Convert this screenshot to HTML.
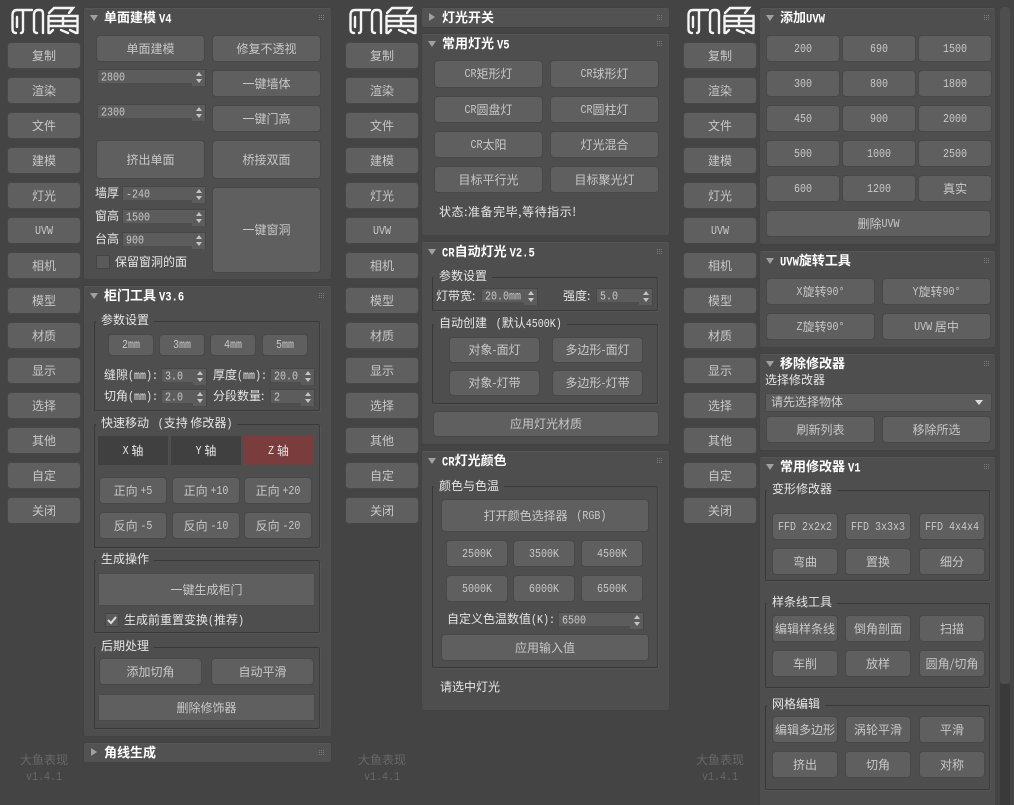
<!DOCTYPE html>
<html><head><meta charset="utf-8"><title>大鱼表现</title>
<style>
*{box-sizing:border-box;margin:0;padding:0}
html,body{width:1014px;height:805px;overflow:hidden;background:#444}
body{position:relative;font:12px/16px "WenQuanYi Zen Hei","Noto Sans CJK SC",sans-serif;color:#ccc}
i{font:normal 10px/16px "Liberation Mono",monospace;display:inline-block;transform:scaleY(1.2);white-space:pre}
.b i,.n i,.q i,.x i{transform:translateY(2px) scaleY(1.2)}
.c{position:absolute;top:0;width:88px;height:805px}
.l{position:absolute;left:11px;top:6px}
.n{position:absolute;left:7px;width:74px;height:27px}
.b,.n,.q{background:#5f5f5f;border:1px solid #484848;border-radius:4px;color:#c8c8c8;display:flex;align-items:center;justify-content:center;white-space:nowrap}
.b,.q{position:absolute}
.q{border-radius:0;border-color:#4a4a4a}
.f1,.f2{position:absolute;left:0;width:88px;text-align:center;color:#686868}
.f1{top:752px}.f2{top:768px}
.p{position:absolute;background:#4e4e4e;border:1px solid #424242;border-radius:3px;box-shadow:inset 0 1px #565656}
.h{position:absolute;white-space:nowrap;color:#fff;font-weight:bold;font-size:13px;line-height:16px}
.h i{font-weight:bold;font-size:10.5px}
.d,.r{position:absolute;width:0;height:0}
.d{border:4px solid transparent;border-top:6px solid #a0a0a0;border-bottom:0}
.r{border:4px solid transparent;border-left:6px solid #a0a0a0;border-right:0}
.o{position:absolute;width:1px;height:1px;background:#7a7a7a;box-shadow:2px 0 #7a7a7a,4px 0 #7a7a7a,0 2px #7a7a7a,2px 2px #7a7a7a,4px 2px #7a7a7a,0 4px #7a7a7a,2px 4px #7a7a7a,4px 4px #7a7a7a}
.g{position:absolute;border:1px solid #383838;border-right-color:#3c3c3c;border-radius:2px;box-shadow:1px 1px #555}
.e,.t{position:absolute;white-space:nowrap;color:#e6e6e6;line-height:16px}
.e{background:#4e4e4e;padding:0 5px}
.s{position:absolute;height:18px;border:1px solid #464646;border-left-color:#4a4a4a;background:linear-gradient(#5c5c5c,#5c5c5c) 0 0/100% 13px no-repeat,linear-gradient(#5c5c5c,#5c5c5c) right 0/13px 100% no-repeat;border-bottom-color:transparent;color:#c8c8c8;padding-left:3px;line-height:13px;white-space:nowrap}
.s i{line-height:13px;transform:translateY(-1px) scaleY(1.2)}
.s:before,.s:after{content:"";position:absolute;right:3px;border:3px solid transparent}
.s:before{top:2px;border-bottom:4px solid #c4c4c4;border-top:0}
.s:after{top:9px;border-top:4px solid #c4c4c4;border-bottom:0}
.k{position:absolute;width:14px;height:14px;background:#5a5a5a;border:1px solid #454545}
.x{position:absolute;background:#404040;color:#e8e8e8;display:flex;align-items:center;justify-content:center;white-space:nowrap}
.dd{position:absolute;background:#5c5c5c;border:1px solid #484848;color:#ccc;line-height:16px;padding-left:5px}
</style></head><body>

<div class="c" style="left:0">
<svg class="l" width="70" height="30" viewBox="0 0 70 30" fill="none" stroke="#f4f4f4" stroke-width="2.4" stroke-linecap="round"><path d="M1.5 9Q1.5 4 6 4H21M1.5 9V23Q1.5 27 5 27M6 11V21M12 4V24Q12 27 10 27M23 9V24Q23 27 26 27M23 9Q23 4 27 4H29Q32 4 32 8V27"/><path d="M38 7L43 2H62L58 7M37.5 10H66.5V27M37.5 10V27M38 15H66M38 20H66M52 10V20M42 24L39 27M50 24L57 27M59 24L65 27"/></svg>
<div class="n" style="top:42px">复制</div><div class="n" style="top:77px">渲染</div><div class="n" style="top:112px">文件</div><div class="n" style="top:147px">建模</div><div class="n" style="top:182px">灯光</div><div class="n" style="top:217px"><i>UVW</i></div><div class="n" style="top:252px">相机</div><div class="n" style="top:287px">模型</div><div class="n" style="top:322px">材质</div><div class="n" style="top:357px">显示</div><div class="n" style="top:392px">选择</div><div class="n" style="top:427px">其他</div><div class="n" style="top:462px">自定</div><div class="n" style="top:497px">关闭</div>
<div class="f1">大鱼表现</div><div class="f2"><i>v1.4.1</i></div>
</div>
<div class="c" style="left:338px">
<svg class="l" width="70" height="30" viewBox="0 0 70 30" fill="none" stroke="#f4f4f4" stroke-width="2.4" stroke-linecap="round"><path d="M1.5 9Q1.5 4 6 4H21M1.5 9V23Q1.5 27 5 27M6 11V21M12 4V24Q12 27 10 27M23 9V24Q23 27 26 27M23 9Q23 4 27 4H29Q32 4 32 8V27"/><path d="M38 7L43 2H62L58 7M37.5 10H66.5V27M37.5 10V27M38 15H66M38 20H66M52 10V20M42 24L39 27M50 24L57 27M59 24L65 27"/></svg>
<div class="n" style="top:42px">复制</div><div class="n" style="top:77px">渲染</div><div class="n" style="top:112px">文件</div><div class="n" style="top:147px">建模</div><div class="n" style="top:182px">灯光</div><div class="n" style="top:217px"><i>UVW</i></div><div class="n" style="top:252px">相机</div><div class="n" style="top:287px">模型</div><div class="n" style="top:322px">材质</div><div class="n" style="top:357px">显示</div><div class="n" style="top:392px">选择</div><div class="n" style="top:427px">其他</div><div class="n" style="top:462px">自定</div><div class="n" style="top:497px">关闭</div>
<div class="f1">大鱼表现</div><div class="f2"><i>v1.4.1</i></div>
</div>
<div class="c" style="left:676px">
<svg class="l" width="70" height="30" viewBox="0 0 70 30" fill="none" stroke="#f4f4f4" stroke-width="2.4" stroke-linecap="round"><path d="M1.5 9Q1.5 4 6 4H21M1.5 9V23Q1.5 27 5 27M6 11V21M12 4V24Q12 27 10 27M23 9V24Q23 27 26 27M23 9Q23 4 27 4H29Q32 4 32 8V27"/><path d="M38 7L43 2H62L58 7M37.5 10H66.5V27M37.5 10V27M38 15H66M38 20H66M52 10V20M42 24L39 27M50 24L57 27M59 24L65 27"/></svg>
<div class="n" style="top:42px">复制</div><div class="n" style="top:77px">渲染</div><div class="n" style="top:112px">文件</div><div class="n" style="top:147px">建模</div><div class="n" style="top:182px">灯光</div><div class="n" style="top:217px"><i>UVW</i></div><div class="n" style="top:252px">相机</div><div class="n" style="top:287px">模型</div><div class="n" style="top:322px">材质</div><div class="n" style="top:357px">显示</div><div class="n" style="top:392px">选择</div><div class="n" style="top:427px">其他</div><div class="n" style="top:462px">自定</div><div class="n" style="top:497px">关闭</div>
<div class="f1">大鱼表现</div><div class="f2"><i>v1.4.1</i></div>
</div>

<!-- column 1 -->
<div class="p" style="left:83px;top:7px;width:249px;height:273px"></div>
<div class="d" style="left:90px;top:15px"></div><div class="h" style="left:104px;top:9px">单面建模 <i>V4</i></div><div class="o" style="left:319px;top:15px"></div>
<div class="b" style="left:96px;top:35px;width:109px;height:27px">单面建模</div>
<div class="b" style="left:212px;top:35px;width:109px;height:27px">修复不透视</div>
<div class="s" style="left:97px;top:69px;width:109px"><i>2800</i></div>
<div class="b" style="left:212px;top:70px;width:109px;height:27px">一键墙体</div>
<div class="s" style="left:97px;top:104px;width:109px"><i>2300</i></div>
<div class="b" style="left:212px;top:105px;width:109px;height:27px">一键门高</div>
<div class="b" style="left:96px;top:140px;width:109px;height:39px">挤出单面</div>
<div class="b" style="left:212px;top:140px;width:109px;height:39px">桥接双面</div>
<div class="t" style="left:95px;top:185px">墙厚</div><div class="s" style="left:122px;top:186px;width:84px"><i>-240</i></div>
<div class="t" style="left:95px;top:208px">窗高</div><div class="s" style="left:122px;top:209px;width:84px"><i>1500</i></div>
<div class="t" style="left:95px;top:231px">台高</div><div class="s" style="left:122px;top:232px;width:84px"><i>900</i></div>
<div class="b" style="left:212px;top:187px;width:109px;height:86px">一键窗洞</div>
<div class="k" style="left:96px;top:255px"></div><div class="t" style="left:115px;top:254px">保留窗洞的面</div>

<div class="p" style="left:83px;top:285px;width:249px;height:452px"></div>
<div class="d" style="left:90px;top:293px"></div><div class="h" style="left:104px;top:287px">柜门工具 <i>V3.6</i></div><div class="o" style="left:319px;top:293px"></div>
<div class="g" style="left:94px;top:321px;width:226px;height:90px"></div><div class="e" style="left:96px;top:312px">参数设置</div>
<div class="b" style="left:108px;top:334px;width:46px;height:22px"><i>2mm</i></div>
<div class="b" style="left:159px;top:334px;width:46px;height:22px"><i>3mm</i></div>
<div class="b" style="left:210px;top:334px;width:46px;height:22px"><i>4mm</i></div>
<div class="b" style="left:262px;top:334px;width:46px;height:22px"><i>5mm</i></div>
<div class="t" style="left:104px;top:367px">缝隙<i>(mm):</i></div><div class="s" style="left:161px;top:368px;width:46px"><i>3.0</i></div>
<div class="t" style="left:213px;top:367px">厚度<i>(mm):</i></div><div class="s" style="left:270px;top:368px;width:45px"><i>20.0</i></div>
<div class="t" style="left:104px;top:388px">切角<i>(mm):</i></div><div class="s" style="left:161px;top:389px;width:46px"><i>2.0</i></div>
<div class="t" style="left:213px;top:388px">分段数量:</div><div class="s" style="left:270px;top:389px;width:45px"><i>2</i></div>
<div class="g" style="left:94px;top:424px;width:226px;height:124px"></div><div class="e" style="left:96px;top:415px">快速移动 <i> (</i>支持 修改器<i>)</i></div>
<div class="x" style="left:98px;top:436px;width:70px;height:29px"><i>X</i>&nbsp;轴</div>
<div class="x" style="left:171px;top:436px;width:70px;height:29px"><i>Y</i>&nbsp;轴</div>
<div class="x" style="left:243px;top:436px;width:71px;height:29px;background:#7a3c3c"><i>Z</i>&nbsp;轴</div>
<div class="b" style="left:99px;top:477px;width:68px;height:27px">正向&nbsp;<i>+5</i></div>
<div class="b" style="left:172px;top:477px;width:68px;height:27px">正向&nbsp;<i>+10</i></div>
<div class="b" style="left:244px;top:477px;width:68px;height:27px">正向&nbsp;<i>+20</i></div>
<div class="b" style="left:99px;top:512px;width:68px;height:27px">反向&nbsp;<i>-5</i></div>
<div class="b" style="left:172px;top:512px;width:68px;height:27px">反向&nbsp;<i>-10</i></div>
<div class="b" style="left:244px;top:512px;width:68px;height:27px">反向&nbsp;<i>-20</i></div>
<div class="g" style="left:94px;top:560px;width:226px;height:73px"></div><div class="e" style="left:96px;top:551px">生成操作</div>
<div class="q" style="left:98px;top:573px;width:217px;height:33px">一键生成柜门</div>
<div class="k" style="left:105px;top:613px"></div><svg style="position:absolute;left:105px;top:613px" width="14" height="14" fill="none" stroke="#ddd" stroke-width="2"><path d="M3 7L6 10L11 4"/></svg>
<div class="t" style="left:124px;top:612px">生成前重置变换<i>(</i>推荐<i>)</i></div>
<div class="g" style="left:94px;top:647px;width:226px;height:82px"></div><div class="e" style="left:96px;top:638px">后期处理</div>
<div class="b" style="left:99px;top:658px;width:103px;height:27px">添加切角</div>
<div class="b" style="left:211px;top:658px;width:103px;height:27px">自动平滑</div>
<div class="q" style="left:98px;top:694px;width:217px;height:27px">删除修饰器</div>

<div class="p" style="left:83px;top:742px;width:249px;height:21px;background:#525252"></div>
<div class="r" style="left:91px;top:748px"></div><div class="h" style="left:104px;top:744px">角线生成</div><div class="o" style="left:319px;top:750px"></div>

<!-- column 2 -->
<div class="p" style="left:421px;top:7px;width:249px;height:21px;background:#525252"></div>
<div class="r" style="left:429px;top:13px"></div><div class="h" style="left:442px;top:9px">灯光开关</div><div class="o" style="left:657px;top:15px"></div>
<div class="p" style="left:421px;top:33px;width:249px;height:203px"></div>
<div class="d" style="left:428px;top:41px"></div><div class="h" style="left:442px;top:35px">常用灯光 <i>V5</i></div><div class="o" style="left:657px;top:41px"></div>
<div class="b" style="left:434px;top:60px;width:109px;height:28px"><i>CR</i>矩形灯</div>
<div class="b" style="left:550px;top:60px;width:109px;height:28px"><i>CR</i>球形灯</div>
<div class="b" style="left:434px;top:96px;width:109px;height:27px"><i>CR</i>圆盘灯</div>
<div class="b" style="left:550px;top:96px;width:109px;height:27px"><i>CR</i>圆柱灯</div>
<div class="b" style="left:434px;top:131px;width:109px;height:27px"><i>CR</i>太阳</div>
<div class="b" style="left:550px;top:131px;width:109px;height:27px">灯光混合</div>
<div class="b" style="left:434px;top:166px;width:109px;height:27px">目标平行光</div>
<div class="b" style="left:550px;top:166px;width:109px;height:27px">目标聚光灯</div>
<div class="t" style="left:439px;top:204px;letter-spacing:.55px">状态:准备完毕,等待指示!</div>

<div class="p" style="left:421px;top:241px;width:249px;height:204px"></div>
<div class="d" style="left:428px;top:249px"></div><div class="h" style="left:442px;top:243px"><i>CR</i>自动灯光 <i>V2.5</i></div><div class="o" style="left:657px;top:249px"></div>
<div class="g" style="left:432px;top:277px;width:226px;height:34px"></div><div class="e" style="left:434px;top:268px">参数设置</div>
<div class="t" style="left:436px;top:288px">灯带宽:</div><div class="s" style="left:481px;top:288px;width:57px"><i>20.0mm</i></div>
<div class="t" style="left:563px;top:288px">强度:</div><div class="s" style="left:596px;top:288px;width:57px"><i>5.0</i></div>
<div class="g" style="left:432px;top:324px;width:226px;height:80px"></div><div class="e" style="left:434px;top:315px">自动创建 <i> (</i>默认<i>4500K)</i></div>
<div class="b" style="left:449px;top:337px;width:91px;height:26px">对象-面灯</div>
<div class="b" style="left:552px;top:337px;width:91px;height:26px">多边形-面灯</div>
<div class="b" style="left:449px;top:370px;width:91px;height:26px">对象-灯带</div>
<div class="b" style="left:552px;top:370px;width:91px;height:26px">多边形-灯带</div>
<div class="b" style="left:433px;top:411px;width:226px;height:26px">应用灯光材质</div>

<div class="p" style="left:421px;top:450px;width:249px;height:261px"></div>
<div class="d" style="left:428px;top:458px"></div><div class="h" style="left:442px;top:452px"><i>CR</i>灯光颜色</div><div class="o" style="left:657px;top:458px"></div>
<div class="g" style="left:432px;top:486px;width:226px;height:182px"></div><div class="e" style="left:434px;top:478px">颜色与色温</div>
<div class="b" style="left:441px;top:499px;width:208px;height:33px">打开颜色选择器&nbsp;<i> (RGB)</i></div>
<div class="b" style="left:446px;top:540px;width:62px;height:27px"><i>2500K</i></div>
<div class="b" style="left:513px;top:540px;width:62px;height:27px"><i>3500K</i></div>
<div class="b" style="left:581px;top:540px;width:62px;height:27px"><i>4500K</i></div>
<div class="b" style="left:446px;top:575px;width:62px;height:27px"><i>5000K</i></div>
<div class="b" style="left:513px;top:575px;width:62px;height:27px"><i>6000K</i></div>
<div class="b" style="left:581px;top:575px;width:62px;height:27px"><i>6500K</i></div>
<div class="t" style="left:447px;top:611px">自定义色温数值<i>(K):</i></div><div class="s" style="left:558px;top:612px;width:86px"><i>6500</i></div>
<div class="b" style="left:441px;top:634px;width:208px;height:27px">应用输入值</div>
<div class="t" style="left:440px;top:679px">请选中灯光</div>

<!-- column 3 -->
<div style="position:absolute;left:1000px;top:7px;width:10px;height:798px;background:#3a3a3a"></div>
<div style="position:absolute;left:1000px;top:7px;width:10px;height:677px;background:#4e4e4e;border-radius:3px"></div>
<div class="p" style="left:759px;top:7px;width:237px;height:238px"></div>
<div class="d" style="left:766px;top:15px"></div><div class="h" style="left:780px;top:9px">添加<i>UVW</i></div><div class="o" style="left:984px;top:15px"></div>
<div class="b" style="left:766px;top:35px;width:74px;height:27px"><i>200</i></div><div class="b" style="left:842px;top:35px;width:74px;height:27px"><i>690</i></div><div class="b" style="left:918px;top:35px;width:74px;height:27px"><i>1500</i></div>
<div class="b" style="left:766px;top:70px;width:74px;height:27px"><i>300</i></div><div class="b" style="left:842px;top:70px;width:74px;height:27px"><i>800</i></div><div class="b" style="left:918px;top:70px;width:74px;height:27px"><i>1800</i></div>
<div class="b" style="left:766px;top:105px;width:74px;height:27px"><i>450</i></div><div class="b" style="left:842px;top:105px;width:74px;height:27px"><i>900</i></div><div class="b" style="left:918px;top:105px;width:74px;height:27px"><i>2000</i></div>
<div class="b" style="left:766px;top:140px;width:74px;height:27px"><i>500</i></div><div class="b" style="left:842px;top:140px;width:74px;height:27px"><i>1000</i></div><div class="b" style="left:918px;top:140px;width:74px;height:27px"><i>2500</i></div>
<div class="b" style="left:766px;top:175px;width:74px;height:27px"><i>600</i></div><div class="b" style="left:842px;top:175px;width:74px;height:27px"><i>1200</i></div><div class="b" style="left:918px;top:175px;width:74px;height:27px">真实</div>
<div class="b" style="left:766px;top:210px;width:225px;height:27px">删除<i>UVW</i></div>

<div class="p" style="left:759px;top:250px;width:237px;height:98px"></div>
<div class="d" style="left:766px;top:258px"></div><div class="h" style="left:780px;top:252px"><i>UVW</i>旋转工具</div><div class="o" style="left:984px;top:258px"></div>
<div class="b" style="left:766px;top:278px;width:109px;height:27px"><i>X</i>旋转<i>90°</i></div>
<div class="b" style="left:882px;top:278px;width:109px;height:27px"><i>Y</i>旋转<i>90°</i></div>
<div class="b" style="left:766px;top:313px;width:109px;height:27px"><i>Z</i>旋转<i>90°</i></div>
<div class="b" style="left:882px;top:313px;width:109px;height:27px"><i>UVW</i>&nbsp;居中</div>

<div class="p" style="left:759px;top:353px;width:237px;height:98px"></div>
<div class="d" style="left:766px;top:361px"></div><div class="h" style="left:780px;top:355px">移除修改器</div><div class="o" style="left:984px;top:361px"></div>
<div class="t" style="left:765px;top:372px">选择修改器</div>
<div class="dd" style="left:765px;top:393px;width:227px;height:19px">请先选择物体<div class="d" style="left:209px;top:6px;border-top-color:#ddd;border-width:5px 4px 0"></div></div>
<div class="b" style="left:766px;top:416px;width:109px;height:27px">刷新列表</div>
<div class="b" style="left:882px;top:416px;width:109px;height:27px">移除所选</div>

<div class="p" style="left:759px;top:456px;width:237px;height:352px"></div>
<div class="d" style="left:766px;top:464px"></div><div class="h" style="left:780px;top:458px">常用修改器 <i>V1</i></div><div class="o" style="left:984px;top:464px"></div>
<div class="g" style="left:765px;top:490px;width:225px;height:91px"></div><div class="e" style="left:767px;top:481px">变形修改器</div>
<div class="b" style="left:772px;top:513px;width:66px;height:27px"><i>FFD 2x2x2</i></div><div class="b" style="left:845px;top:513px;width:66px;height:27px"><i>FFD 3x3x3</i></div><div class="b" style="left:919px;top:513px;width:66px;height:27px"><i>FFD 4x4x4</i></div>
<div class="b" style="left:772px;top:548px;width:66px;height:27px">弯曲</div><div class="b" style="left:845px;top:548px;width:66px;height:27px">置换</div><div class="b" style="left:919px;top:548px;width:66px;height:27px">细分</div>
<div class="g" style="left:765px;top:603px;width:225px;height:85px"></div><div class="e" style="left:767px;top:594px">样条线工具</div>
<div class="b" style="left:772px;top:615px;width:66px;height:27px">编辑样条线</div><div class="b" style="left:845px;top:615px;width:66px;height:27px">倒角剖面</div><div class="b" style="left:919px;top:615px;width:66px;height:27px">扫描</div>
<div class="b" style="left:772px;top:650px;width:66px;height:27px">车削</div><div class="b" style="left:845px;top:650px;width:66px;height:27px">放样</div><div class="b" style="left:919px;top:650px;width:66px;height:27px">圆角/切角</div>
<div class="g" style="left:765px;top:705px;width:225px;height:85px"></div><div class="e" style="left:767px;top:696px">网格编辑</div>
<div class="b" style="left:772px;top:716px;width:66px;height:27px">编辑多边形</div><div class="b" style="left:845px;top:716px;width:66px;height:27px">涡轮平滑</div><div class="b" style="left:919px;top:716px;width:66px;height:27px">平滑</div>
<div class="b" style="left:772px;top:751px;width:66px;height:27px">挤出</div><div class="b" style="left:845px;top:751px;width:66px;height:27px">切角</div><div class="b" style="left:919px;top:751px;width:66px;height:27px">对称</div>
</body></html>
